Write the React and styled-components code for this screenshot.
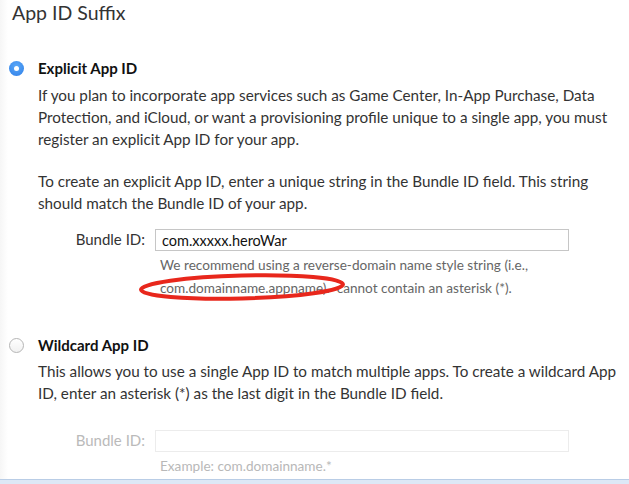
import React from "react";
import styled, { createGlobalStyle } from "styled-components";

const GlobalStyle = createGlobalStyle`
  html, body {
    margin: 0;
    padding: 0;
    background: #ffffff;
  }
  body {
    font-family: "Lato", "Liberation Sans", sans-serif;
    color: #333333;
  }
`;

const Page = styled.div`
  width: 629px;
  height: 484px;
  position: relative;
  overflow: hidden;
  background: linear-gradient(to right, #f6f6f6 0px, #ffffff 8px);
`;

const Title = styled.h2`
  margin: 0;
  padding: 1px 0 0 12px;
  font-size: 19.5px;
  font-weight: 400;
  color: #333;
  line-height: 24px;
`;

const Option = styled.section`
  display: grid;
  grid-template-columns: 38px 1fr;
  margin-top: ${(p) => p.$top}px;
`;

const Radio = styled.span`
  width: 15px;
  height: 15px;
  border-radius: 50%;
  margin: 4px 0 0 9px;
  box-sizing: border-box;
  display: flex;
  align-items: center;
  justify-content: center;
  ${(p) =>
    p.$checked
      ? `background: radial-gradient(circle at 50% 35%, #5aa8f8, #2f7fe8);
         &::after { content: ""; width: 5px; height: 5px; border-radius: 50%; background: #fff; }`
      : `border: 1px solid #b5b5b5; background: linear-gradient(#fff, #f1f1f1);`}
`;

const Body = styled.div`
  padding-right: 6px;
`;

const Heading = styled.h3`
  margin: 0;
  font-size: 15px;
  font-weight: 700;
  color: #111;
  line-height: 22px;
`;

const Para = styled.p`
  margin: ${(p) => p.$top || 0}px 0 0 0;
  font-size: 15.25px;
  line-height: 22px;
  color: #333;
`;

const Field = styled.div`
  display: grid;
  grid-template-columns: 145px 414px;
  column-gap: 10px;
  margin: ${(p) => p.$top}px 0 0 0;
  color: ${(p) => (p.$disabled ? "#aaa" : "#333")};
`;

const Label = styled.label`
  text-align: right;
  font-size: 15px;
  line-height: 21px;
  opacity: ${(p) => (p.$disabled ? 0.8 : 1)};
`;

const Input = styled.input`
  box-sizing: border-box;
  width: 414px;
  height: 22px;
  border: 1px solid ${(p) => (p.disabled ? "#ececec" : "#c6c6c6")};
  background: #fff;
  padding: 0 6px;
  font-family: "Lato", "Liberation Sans", sans-serif;
  font-size: 14.5px;
  color: #111;
  outline: none;
`;

const Hint = styled.div`
  grid-column: 2;
  position: relative;
  padding: 3px 0 0 5px;
  font-size: 13.6px;
  line-height: 23px;
  color: ${(p) => (p.$disabled ? "#b8b8b8" : "#666")};
`;

const Ellipse = styled.svg`
  position: absolute;
  left: -17px;
  top: 20px;
  pointer-events: none;
`;

const Footer = styled.div`
  position: absolute;
  left: 0;
  right: 0;
  bottom: 0;
  height: 4px;
  background: #dde8f6;
  border-top: 1px solid #b9cde6;
`;

export default function App() {
  return (
    <Page>
      <GlobalStyle />
      <Title>App ID Suffix</Title>

      <Option $top={32}>
        <Radio $checked />
        <Body>
          <Heading>Explicit App ID</Heading>
          <Para $top={5}>
            If you plan to incorporate app services such as Game Center, In-App Purchase, Data
            Protection, and iCloud, or want a provisioning profile unique to a single app, you must
            register an explicit App ID for your app.
          </Para>
          <Para $top={20}>
            To create an explicit App ID, enter a unique string in the Bundle ID field. This string
            should match the Bundle ID of your app.
          </Para>
        </Body>
      </Option>

      <Field $top={15}>
        <Label>Bundle ID:</Label>
        <Input defaultValue="com.xxxxx.heroWar" />
        <Hint>
          We recommend using a reverse-domain name style string (i.e.,
          <br />
          com.domainname.appname). &nbsp;cannot contain an asterisk (*).
          <Ellipse width="212" height="32" viewBox="0 0 212 32">
            <ellipse cx="104" cy="16" rx="101" ry="11.5" fill="none" stroke="#e8271c" strokeWidth="4" transform="rotate(-1.5 104 16)" />
          </Ellipse>
        </Hint>
      </Field>

      <Option $top={34}>
        <Radio />
        <Body>
          <Heading>Wildcard App ID</Heading>
          <Para $top={4}>
            This allows you to use a single App ID to match multiple apps. To create a wildcard App
            ID, enter an asterisk (*) as the last digit in the Bundle ID field.
          </Para>
        </Body>
      </Option>

      <Field $top={26} $disabled>
        <Label $disabled>Bundle ID:</Label>
        <Input disabled />
        <Hint $disabled>Example: com.domainname.*</Hint>
      </Field>

      <Footer />
    </Page>
  );
}
